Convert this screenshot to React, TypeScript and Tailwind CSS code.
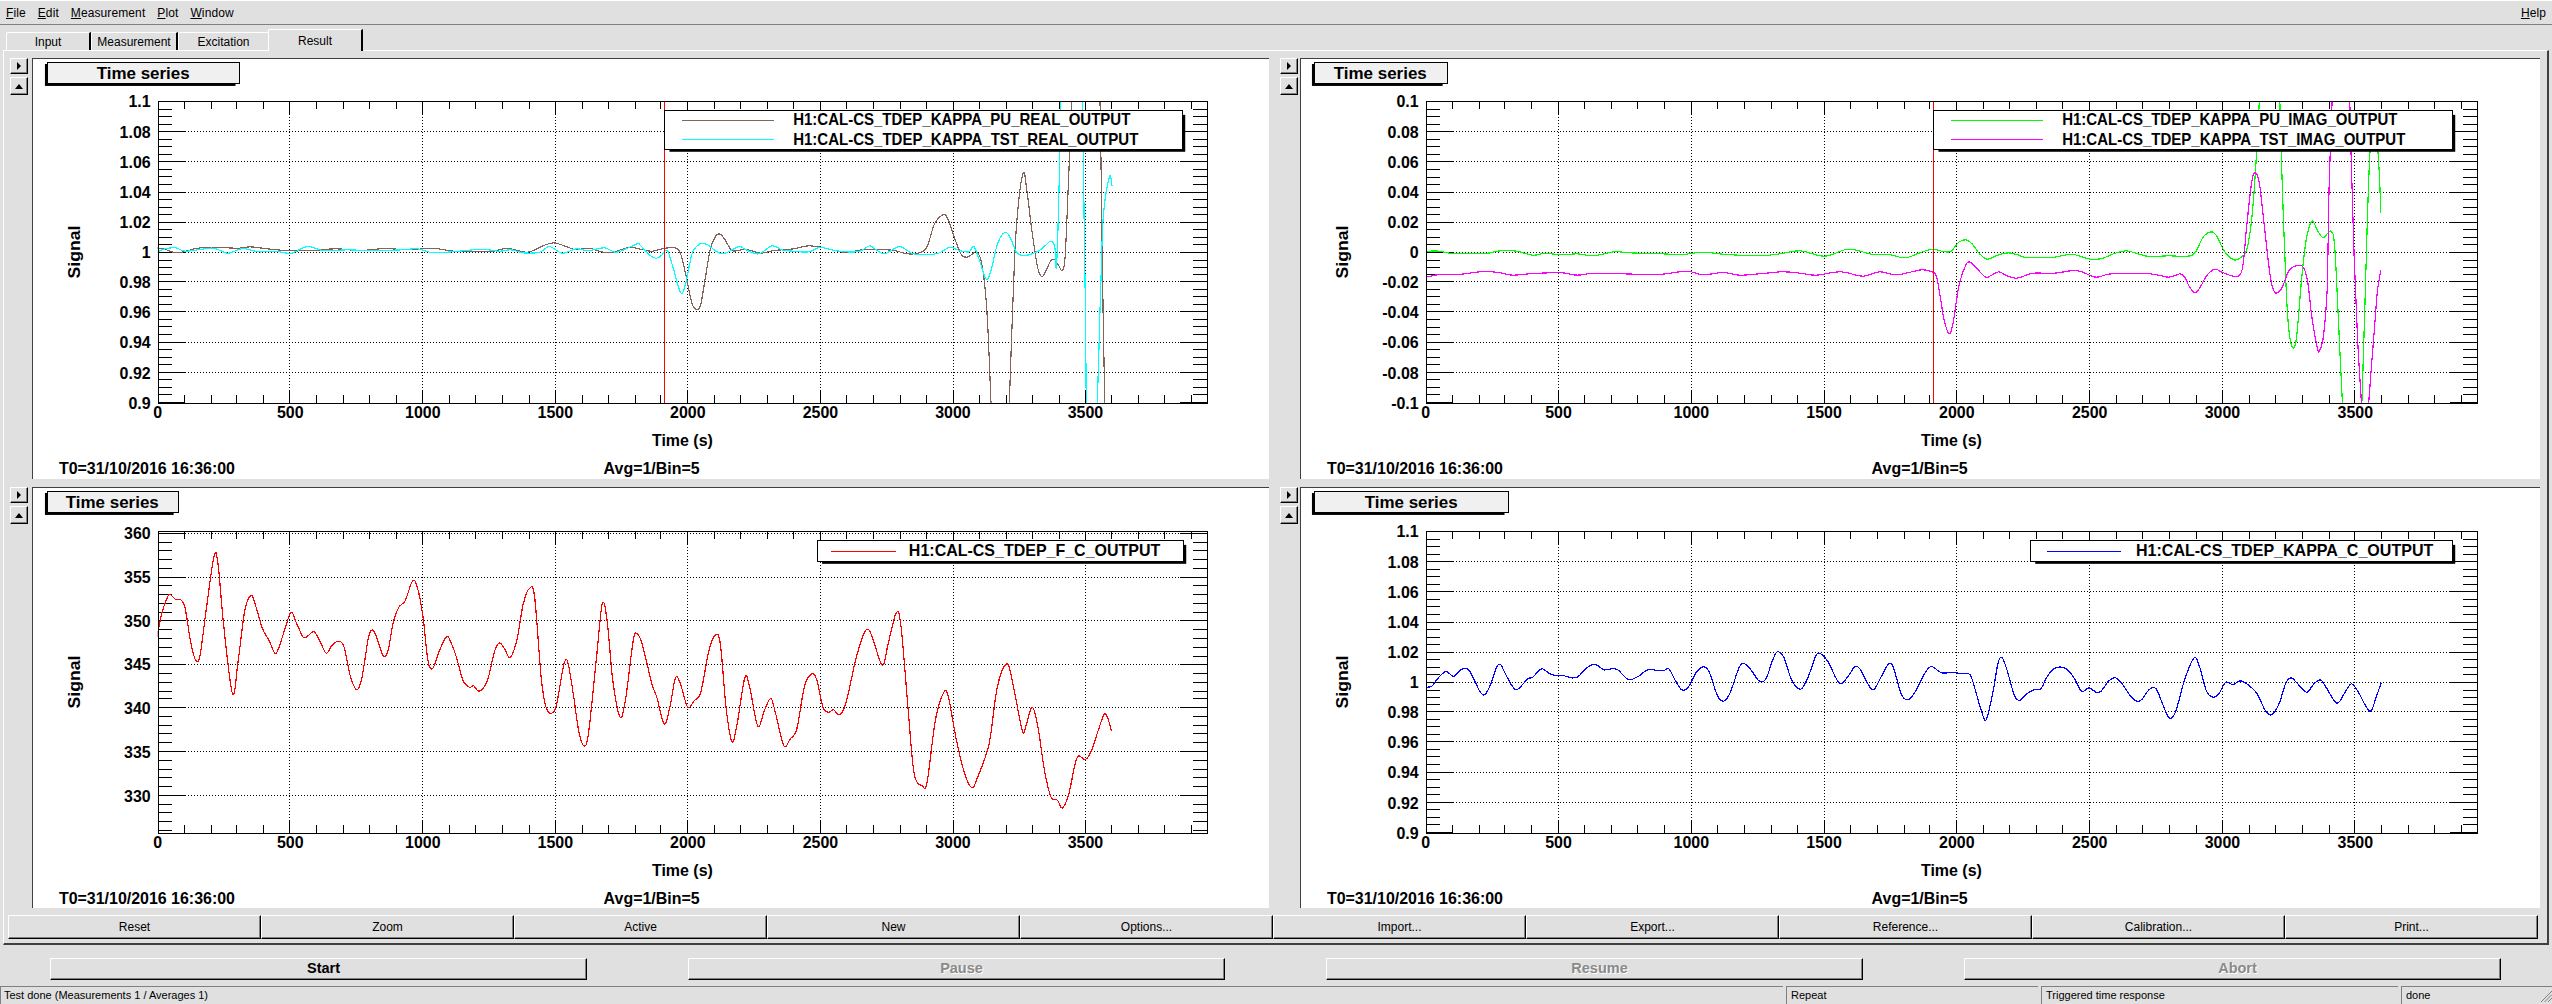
import React from 'react';

type Pt = [number, number];

// curve points were read off enlarged crops, crop -> screen coordinates
const crop = (pts: Pt[], ox: number, sx: number, oy: number): Pt[] =>
  pts.map(([x, y]) => [ox + x / sx, oy + y / 3] as Pt);

const brownEarly: Pt[] = [[190,562],[200,566],[215,577],[240,563],[260,560],[290,563],[305,559],[330,566],[355,571],[380,570],[410,565],[440,570],[470,564],[500,568],[530,563],[555,572],[600,573],[620,563],[645,575],[665,555],[678,547],[695,560],[705,568],[720,563],[745,577],[770,560]];
const brownLate: Pt[] = [[0,476],[30,482],[60,474],[90,472],[105,490],[120,560],[135,640],[148,658],[158,640],[170,560],[182,480],[195,440],[207,430],[220,445],[240,480],[270,477],[290,480],[315,488],[350,480],[400,475],[440,466],[480,472],[510,480],[540,486],[580,478],[620,478],[660,479],[700,490],[730,487],[750,470],[770,400],[792,373],[805,385],[825,450],[840,492],[855,500],[870,490],[880,484],[892,510],[903,600],[910,720],[918,938],[920,990],[964,990],[966,938],[975,650],[985,400],[1002,248],[1012,300],[1025,420],[1040,530],[1050,558],[1060,545],[1075,510],[1085,508],[1095,525],[1105,540],[1112,500],[1120,300],[1130,20],[1140,-60],[1195,-60],[1203,20],[1206,200],[1212,690],[1217,990]];
const cyanEarly: Pt[] = [[190,575],[200,565],[213,562],[225,572],[245,566],[260,563],[278,578],[295,564],[315,574],[335,572],[355,578],[375,558],[395,570],[425,568],[445,570],[465,570],[490,568],[510,565],[530,577],[560,572],[590,566],[610,572],[625,568],[640,577],[660,575],[672,558],[688,578],[705,565],[720,570],[740,562],[755,575],[780,550]];
const cyanLate: Pt[] = [[0,465],[20,490],[40,503],[55,495],[70,480],[85,530],[105,607],[118,580],[135,490],[155,460],[175,462],[195,480],[215,490],[240,478],[260,468],[280,480],[310,490],[345,466],[370,478],[400,482],[440,484],[470,470],[500,478],[540,484],[575,482],[600,466],[620,480],[640,490],[678,468],[710,488],[740,493],[780,488],[810,470],[835,480],[860,484],[873,468],[888,510],[905,566],[918,540],[935,460],[955,425],[970,445],[985,485],[1005,495],[1040,483],[1060,465],[1075,452],[1085,470],[1090,520],[1098,200],[1100,20],[1102,-60],[1156,-60],[1158,20],[1162,400],[1166,700],[1170,990],[1193,990],[1205,600],[1212,380],[1228,258],[1235,285]];
const greenEarly: Pt[] = [[178,572],[195,572],[212,580],[240,578],[250,580],[270,571],[290,572],[310,584],[325,578],[345,583],[365,580],[385,586],[410,574],[430,577],[470,580],[495,582],[520,575],[550,582],[590,586],[615,580],[640,571],[670,587],[695,568],[708,568],[730,582],[750,582],[770,592],[790,575]];
const greenLate: Pt[] = [[32,476],[60,483],[80,482],[100,455],[118,448],[135,460],[155,490],[175,506],[200,495],[230,487],[255,493],[275,501],[310,502],[350,500],[395,491],[420,498],[445,506],[475,504],[510,488],[540,481],[570,490],[600,498],[650,496],[700,497],[720,485],[740,440],[760,424],[775,435],[795,480],[820,508],[840,500],[855,475],[868,380],[878,230],[888,20],[890,-60],[938,-60],[941,20],[948,300],[958,600],[965,720],[975,772],[985,740],[998,570],[1010,450],[1025,392],[1040,420],[1055,441],[1075,422],[1085,470],[1095,700],[1105,938],[1108,990],[1150,990],[1160,800],[1170,400],[1178,170],[1188,100],[1197,170],[1203,280],[1205,368]];
const magentaEarly: Pt[] = [[178,650],[195,642],[215,643],[245,634],[265,635],[285,644],[310,639],[345,637],[365,644],[385,638],[420,640],[465,642],[500,632],[520,643],[545,636],[565,644],[590,640],[618,634],[640,638],[660,644],[690,634],[718,647],[738,634],[760,643],[790,628]];
const magentaLate: Pt[] = [[32,545],[42,560],[52,620],[62,690],[75,730],[85,700],[100,590],[118,525],[130,515],[145,530],[170,560],[185,555],[205,544],[225,555],[250,563],[270,557],[295,548],[350,548],[395,541],[420,543],[460,560],[500,550],[600,550],[650,560],[680,550],[692,560],[705,590],[720,607],[735,585],[750,555],[770,536],[790,545],[815,556],[835,555],[845,520],[855,400],[868,270],[878,247],[888,280],[900,400],[915,550],[925,600],[935,607],[948,590],[965,540],[985,526],[1003,530],[1015,580],[1025,680],[1040,775],[1045,780],[1055,740],[1065,600],[1070,300],[1078,30],[1080,-60],[1120,-60],[1124,20],[1128,200],[1136,500],[1145,750],[1155,938],[1158,990],[1172,990],[1175,920],[1190,700],[1197,600],[1206,538]];
const redTrace: Pt[] = [[190,472],[196,400],[203,350],[207,342],[213,356],[220,358],[225,385],[232,490],[238,540],[243,525],[250,400],[260,230],[265,245],[272,430],[283,640],[290,540],[298,390],[306,344],[312,380],[320,445],[328,480],[335,518],[340,500],[348,440],[355,394],[362,430],[370,470],[376,465],[383,453],[390,480],[398,518],[405,495],[413,482],[420,500],[428,590],[436,628],[442,590],[450,470],[455,448],[460,470],[468,525],[474,510],[480,430],[487,380],[495,360],[504,301],[510,320],[517,410],[523,540],[529,563],[537,510],[546,468],[552,490],[558,530],[566,600],[574,620],[579,616],[586,632],[596,600],[605,510],[611,487],[617,505],[624,530],[632,480],[640,370],[648,322],[654,350],[662,590],[668,680],[675,698],[681,670],[690,550],[695,548],[702,650],[708,750],[714,796],[720,760],[730,530],[737,370],[743,420],[750,600],[759,710],[766,650],[775,480],[780,460],[786,490],[798,610],[804,650],[813,730],[820,680],[827,592],[833,610],[842,680],[850,660],[858,635],[868,510],[876,463],[882,490],[889,680],[896,782],[902,740],[912,592],[918,620],[928,737],[936,690],[944,654],[950,700],[960,796],[968,775],[976,745],[985,620],[993,582],[1000,595],[1008,680],[1015,695],[1021,688],[1028,703],[1036,670],[1048,540],[1058,460],[1064,447],[1070,480],[1081,554],[1088,490],[1098,397],[1104,440],[1113,700],[1120,880],[1130,917],[1136,905],[1146,720],[1156,637],[1162,650],[1172,780],[1182,880],[1191,922],[1198,890],[1212,790],[1222,620],[1234,550],[1242,620],[1253,752],[1258,730],[1265,680],[1272,740],[1280,870],[1288,950],[1296,960],[1302,983],[1310,940],[1320,832],[1330,838],[1338,810],[1346,750],[1354,700],[1360,730],[1362,752]];
const blueTrace: Pt[] = [[178,620],[185,617],[192,595],[200,576],[204,573],[212,587],[222,566],[230,566],[236,590],[245,635],[251,641],[258,610],[265,560],[270,552],[276,580],[284,615],[290,628],[298,610],[304,594],[310,590],[317,570],[322,565],[330,578],[338,585],[346,584],[358,592],[366,588],[375,565],[384,552],[390,555],[398,568],[410,564],[416,570],[428,597],[440,588],[452,568],[470,571],[478,565],[486,600],[494,628],[502,620],[512,575],[521,559],[528,575],[538,645],[546,662],[554,635],[565,560],[572,550],[580,570],[590,602],[598,595],[606,540],[612,514],[620,530],[630,600],[641,626],[650,590],[660,524],[667,522],[675,545],[685,595],[691,610],[700,585],[708,558],[714,565],[724,610],[731,628],[740,590],[750,549],[756,565],[765,640],[773,658],[782,635],[795,575],[803,558],[815,577],[830,575],[838,580],[850,582],[858,640],[864,690],[870,718],[878,640],[885,545],[890,532],[896,570],[905,645],[912,659],[920,640],[930,627],[938,624],[945,590],[955,563],[968,563],[978,590],[988,632],[997,622],[1006,635],[1012,632],[1022,600],[1030,592],[1038,610],[1048,645],[1056,662],[1062,658],[1072,626],[1080,625],[1088,670],[1096,712],[1104,695],[1115,600],[1127,532],[1134,560],[1142,630],[1150,650],[1158,638],[1166,605],[1175,612],[1184,601],[1195,615],[1205,640],[1215,690],[1223,703],[1232,670],[1240,610],[1247,592],[1255,610],[1266,635],[1275,610],[1283,598],[1290,620],[1300,660],[1306,665],[1316,625],[1322,610],[1330,635],[1340,680],[1346,690],[1352,650],[1358,608]];

// smooth path through the read-off points
function smooth(pts: Pt[]) {
  let d = `M${pts[0][0].toFixed(1)} ${pts[0][1].toFixed(1)}`;
  for (let i = 0; i < pts.length - 1; i++) {
    const p0 = pts[Math.max(i - 1, 0)];
    const p1 = pts[i];
    const p2 = pts[i + 1];
    const p3 = pts[Math.min(i + 2, pts.length - 1)];
    const c1x = p1[0] + (p2[0] - p0[0]) / 6;
    const c1y = p1[1] + (p2[1] - p0[1]) / 6;
    const c2x = p2[0] - (p3[0] - p1[0]) / 6;
    const c2y = p2[1] - (p3[1] - p1[1]) / 6;
    d += `C${c1x.toFixed(1)} ${c1y.toFixed(1)} ${c2x.toFixed(1)} ${c2y.toFixed(1)} ${p2[0].toFixed(1)} ${p2[1].toFixed(1)}`;
  }
  return d;
}

type LegendRow = { name: string; color: string; width: number };

type ChartProps = {
  id: string;
  canvas: { x: number; y: number; w: number; h: number };
  plot: { l: number; r: number; t: number; b: number };
  title: { x: number; w: number };
  y: { min: number; max: number; major: number; minorDiv: number; first: number; digits: number };
  series: { color: string; pts: Pt[] }[];
  legend: { l: number; r: number; t: number; b: number; lineX: [number, number]; textX: number; rows: LegendRow[] };
  marker?: number;
};

const XMAX = 3959;

function Chart({ id, canvas, plot, title, y, series, legend, marker }: ChartProps) {
  const px = (v: number) => plot.l + (v / XMAX) * (plot.r - plot.l);
  const py = (v: number) => plot.t + ((y.max - v) / (y.max - y.min)) * (plot.b - plot.t);

  const majors: number[] = [];
  for (let v = y.first; v >= y.min - 1e-6; v -= y.major) majors.push(v);
  const minors: number[] = [];
  const step = y.major / y.minorDiv;
  for (let v = y.first + step * 4; v >= y.min - 1e-6; v -= step) {
    if (v <= y.max + 1e-6) minors.push(v);
  }
  const xMajors = [0, 500, 1000, 1500, 2000, 2500, 3000, 3500];
  const xMinors: number[] = [];
  for (let v = 100; v < XMAX; v += 100) if (v % 500 !== 0) xMinors.push(v);

  const ticks: string[] = [];
  const grid: string[] = [];
  majors.forEach((v) => {
    const p = Math.round(py(v) - 0.5) + 0.5;
    ticks.push(`M${plot.l} ${p}h27M${plot.r} ${p}h-27`);
    if (Math.abs(v - y.max) > 1e-6 && Math.abs(v - y.min) > 1e-6) grid.push(`M${plot.l + 27} ${p}H${plot.r - 27}`);
  });
  minors.forEach((v) => {
    const p = Math.round(py(v) - 0.5) + 0.5;
    ticks.push(`M${plot.l} ${p}h14M${plot.r} ${p}h-14`);
  });
  xMajors.forEach((v) => {
    const p = Math.round(px(v) - 0.5) + 0.5;
    ticks.push(`M${p} ${plot.t}v13M${p} ${plot.b}v-13`);
    if (v > 0) grid.push(`M${p} ${plot.t + 13}V${plot.b - 13}`);
  });
  xMinors.forEach((v) => {
    const p = Math.round(px(v) - 0.5) + 0.5;
    ticks.push(`M${p} ${plot.t}v8M${p} ${plot.b}v-8`);
  });

  const midX = (plot.l + plot.r) / 2;
  const midY = (plot.t + plot.b) / 2;
  const titleY = canvas.y + 3;

  return (
    <svg
      className="block bg-white border-t border-l border-t-[#404040] border-l-[#404040]"
      width={canvas.w}
      height={canvas.h}
      viewBox={`${canvas.x} ${canvas.y} ${canvas.w} ${canvas.h}`}
    >
      <defs>
        <clipPath id={id}>
          <rect x={plot.l} y={plot.t} width={plot.r - plot.l} height={plot.b - plot.t} />
        </clipPath>
      </defs>

      {/* title box */}
      <rect x={title.x - 2} y={titleY + 2} width={title.w - 2} height={22} fill="#000" />
      <rect x={title.x + 0.5} y={titleY + 0.5} width={title.w} height={21} fill="#f0f0f0" stroke="#000" shapeRendering="crispEdges" />
      <text x={title.x + title.w / 2} y={titleY + 17} textAnchor="middle" className="fill-black text-[17px] font-bold">
        Time series
      </text>

      {/* grid and ticks */}
      <path d={grid.join('')} stroke="#000" strokeDasharray="1 2" fill="none" shapeRendering="crispEdges" />
      <path d={ticks.join('')} stroke="#000" fill="none" shapeRendering="crispEdges" />

      {/* curves */}
      <g clipPath={`url(#${id})`}>
        {series.map((s) => (
          <path key={s.color} d={smooth(s.pts)} fill="none" stroke={s.color} strokeWidth={1.2} shapeRendering="crispEdges" />
        ))}
      </g>
      {marker && <path d={`M${marker + 0.5} ${plot.t}V${plot.b}`} stroke="#ff0000" shapeRendering="crispEdges" />}

      <rect x={plot.l + 0.5} y={plot.t + 0.5} width={plot.r - plot.l} height={plot.b - plot.t} fill="none" stroke="#000" shapeRendering="crispEdges" />

      {/* legend */}
      <rect x={legend.l + 5} y={legend.t + 5} width={legend.r - legend.l - 2} height={legend.b - legend.t - 2} fill="#000" />
      <rect x={legend.l + 0.5} y={legend.t + 0.5} width={legend.r - legend.l} height={legend.b - legend.t} fill="#fff" stroke="#000" shapeRendering="crispEdges" />
      {legend.rows.map((row, i) => {
        const rowY = legend.rows.length > 1 ? legend.t + 9.5 + i * 19.5 : (legend.t + legend.b) / 2;
        return (
          <g key={row.name}>
            <path d={`M${legend.lineX[0]} ${Math.round(rowY) + 0.5}H${legend.lineX[1]}`} stroke={row.color} shapeRendering="crispEdges" />
            <text x={legend.textX} y={rowY + 6} textLength={row.width} lengthAdjust="spacingAndGlyphs" className="fill-black text-[16px] font-bold">
              {row.name}
            </text>
          </g>
        );
      })}

      {/* axis labels */}
      {majors.map((v) => (
        <text key={v} x={plot.l - 7} y={py(v) + 6} textAnchor="end" className="fill-black text-[16px] font-bold">
          {Math.abs(v) < 1e-6 ? '0' : parseFloat(v.toFixed(y.digits)).toString()}
        </text>
      ))}
      {xMajors.map((v) => (
        <text key={v} x={px(v)} y={plot.b + 15.5} textAnchor="middle" className="fill-black text-[16px] font-bold">
          {v}
        </text>
      ))}
      <text x={midX} y={plot.b + 43} textAnchor="middle" className="fill-black text-[16px] font-bold">
        Time (s)
      </text>
      <text
        x={plot.l - 78}
        y={midY}
        textAnchor="middle"
        textLength={53}
        lengthAdjust="spacingAndGlyphs"
        transform={`rotate(-90 ${plot.l - 78} ${midY})`}
        className="fill-black text-[17px] font-bold"
      >
        Signal
      </text>
      <text x={plot.l - 99} y={plot.b + 71.5} className="fill-black text-[16px] font-bold">
        T0=31/10/2016 16:36:00
      </text>
      <text x={plot.l + 447} y={plot.b + 71.5} className="fill-black text-[16px] font-bold">
        Avg=1/Bin=5
      </text>
    </svg>
  );
}

const raised = 'border border-t-white border-l-white border-r-black border-b-black shadow-[inset_-1px_-1px_0_#808080]';

function ArrowButtons() {
  return (
    <div className="flex w-[18px] shrink-0 flex-col gap-[3px]">
      <div className={`flex h-[16px] items-center justify-center ${raised}`}>
        <svg width="6" height="8" viewBox="0 0 6 8"><path d="M1 0l4 4-4 4z" fill="#000" /></svg>
      </div>
      <div className={`flex h-[18px] items-center justify-center ${raised}`}>
        <svg width="8" height="5" viewBox="0 0 8 5"><path d="M4 0l4 5H0z" fill="#000" /></svg>
      </div>
    </div>
  );
}

const toolbar = ['Reset', 'Zoom', 'Active', 'New', 'Options...', 'Import...', 'Export...', 'Reference...', 'Calibration...', 'Print...'];
const transport = [
  { label: 'Start', enabled: true },
  { label: 'Pause', enabled: false },
  { label: 'Resume', enabled: false },
  { label: 'Abort', enabled: false },
];

const plotTop = { t: 100.5, b: 402.5 };
const plotBottom = { t: 530.5, b: 832.5 };
const kappaAxis = { min: 0.9, max: 1.1, major: 0.02, minorDiv: 4, first: 1.1, digits: 2 };

export default function App() {
  return (
    <div className="flex h-[1004px] w-[2552px] flex-col overflow-hidden bg-[#e0e0e0] font-['Liberation_Sans',Arial,sans-serif] text-[12px] text-black">
      {/* menu bar */}
      <div className="flex h-[25px] shrink-0 items-center gap-3 border-t border-b border-t-white border-b-[#808080] px-[6px] tracking-[0.1px]">
        <span><u>F</u>ile</span>
        <span><u>E</u>dit</span>
        <span><u>M</u>easurement</span>
        <span><u>P</u>lot</span>
        <span><u>W</u>indow</span>
        <span className="ml-auto"><u>H</u>elp</span>
      </div>

      {/* tabs */}
      <div className="relative z-10 flex h-[25px] shrink-0 items-end pl-[6px]">
        <div className="flex h-[18px] w-[85px] items-center justify-center rounded-tl-[2px] border-t border-l border-r-2 border-t-white border-l-white border-r-black">Input</div>
        <div className="flex h-[18px] w-[87px] items-center justify-center rounded-tl-[2px] border-t border-l border-r-2 border-t-white border-l-white border-r-black">Measurement</div>
        <div className="flex h-[18px] w-[90px] items-center justify-center rounded-tl-[2px] border-t border-l border-t-white border-l-white">Excitation</div>
        <div className="-mb-px flex h-[22px] w-[95px] items-start justify-center rounded-tl-[2px] border-t border-l border-r-2 border-t-white border-l-white border-r-black bg-[#e0e0e0] pt-[2px]">Result</div>
      </div>

      {/* tab body */}
      <div className="mx-[3px] flex h-[895px] shrink-0 flex-col border-t border-l border-r-2 border-b-2 border-t-white border-l-white border-r-[#404040] border-b-[#404040] pt-[7px]">
        <div className="flex flex-col gap-[8px]">
          <div className="flex">
            <div className="ml-[6px] flex w-[1259px] gap-[4px]">
              <ArrowButtons />
              <Chart
                id="kappa-real"
                canvas={{ x: 32, y: 58, w: 1237, h: 421 }}
                plot={{ l: 156, r: 1208, ...plotTop }}
                title={{ x: 45, w: 193 }}
                y={kappaAxis}
                marker={664}
                series={[
                  { color: '#84635a', pts: [...crop(brownEarly, 0, 1.225, 60), ...crop(brownLate, 640, 2.613, 90)] },
                  { color: '#00ffff', pts: [...crop(cyanEarly, 0, 1.225, 60), ...crop(cyanLate, 640, 2.613, 90)] },
                ]}
                legend={{
                  l: 664, r: 1183, t: 109, b: 148, lineX: [682, 774], textX: 793,
                  rows: [
                    { name: 'H1:CAL-CS_TDEP_KAPPA_PU_REAL_OUTPUT', color: '#84635a', width: 338 },
                    { name: 'H1:CAL-CS_TDEP_KAPPA_TST_REAL_OUTPUT', color: '#00ffff', width: 346 },
                  ],
                }}
              />
            </div>
            <div className="ml-[11px] flex gap-[2px]">
              <ArrowButtons />
              <Chart
                id="kappa-imag"
                canvas={{ x: 1300, y: 58, w: 1240, h: 421 }}
                plot={{ l: 1424, r: 2478, ...plotTop }}
                title={{ x: 1312, w: 133 }}
                y={{ min: -0.1, max: 0.1, major: 0.02, minorDiv: 4, first: 0.1, digits: 2 }}
                marker={1933}
                series={[
                  { color: '#00ff00', pts: [...crop(greenEarly, 1280, 1.2327, 60), ...crop(greenLate, 1920, 2.613, 90)] },
                  { color: '#ff00ff', pts: [...crop(magentaEarly, 1280, 1.2327, 60), ...crop(magentaLate, 1920, 2.613, 90)] },
                ]}
                legend={{
                  l: 1933, r: 2453, t: 109, b: 148, lineX: [1951, 2043], textX: 2062,
                  rows: [
                    { name: 'H1:CAL-CS_TDEP_KAPPA_PU_IMAG_OUTPUT', color: '#00ff00', width: 336 },
                    { name: 'H1:CAL-CS_TDEP_KAPPA_TST_IMAG_OUTPUT', color: '#ff00ff', width: 344 },
                  ],
                }}
              />
            </div>
          </div>
          <div className="flex">
            <div className="ml-[6px] flex w-[1259px] gap-[4px]">
              <ArrowButtons />
              <Chart
                id="f-c"
                canvas={{ x: 32, y: 487, w: 1237, h: 421 }}
                plot={{ l: 156, r: 1208, ...plotBottom }}
                title={{ x: 45, w: 131 }}
                y={{ min: 325.76, max: 360.2, major: 5, minorDiv: 5, first: 360, digits: 0 }}
                series={[{ color: '#ff0000', pts: crop(redTrace, 0, 1.225, 480) }]}
                legend={{
                  l: 817, r: 1184, t: 539, b: 560, lineX: [831, 896], textX: 909,
                  rows: [{ name: 'H1:CAL-CS_TDEP_F_C_OUTPUT', color: '#ff0000', width: 252 }],
                }}
              />
            </div>
            <div className="ml-[11px] flex gap-[2px]">
              <ArrowButtons />
              <Chart
                id="kappa-c"
                canvas={{ x: 1300, y: 487, w: 1240, h: 421 }}
                plot={{ l: 1424, r: 2478, ...plotBottom }}
                title={{ x: 1312, w: 195 }}
                y={kappaAxis}
                series={[{ color: '#0000ff', pts: crop(blueTrace, 1280, 1.2327, 480) }]}
                legend={{
                  l: 2030, r: 2453, t: 539, b: 560, lineX: [2047, 2121], textX: 2136,
                  rows: [{ name: 'H1:CAL-CS_TDEP_KAPPA_C_OUTPUT', color: '#0000ff', width: 298 }],
                }}
              />
            </div>
          </div>
        </div>

        {/* plot toolbar */}
        <div className="ml-[4px] mt-[7px] flex h-[24px]">
          {toolbar.map((label) => (
            <div key={label} className={`flex w-[253px] items-center justify-center ${raised}`}>{label}</div>
          ))}
        </div>
      </div>

      {/* start / pause / resume / abort */}
      <div className="flex h-[41px] shrink-0 items-center gap-[101px] pl-[50px] pt-[6px]">
        {transport.map((b) => (
          <div
            key={b.label}
            className={`flex h-[22px] w-[537px] items-center justify-center pl-[10px] text-[14.5px] font-bold ${raised} ${b.enabled ? 'text-black' : 'text-[#8a8a8a] [text-shadow:1px_1px_0_#fff]'}`}
          >
            {b.label}
          </div>
        ))}
      </div>

      {/* status bar */}
      <div className="flex h-[18px] shrink-0 gap-[3px] text-[11px]">
        <div className="flex w-[1783px] items-center border-t border-l border-[#808080] pl-[3px]">Test done (Measurements 1 / Averages 1)</div>
        <div className="flex w-[252px] items-center border-t border-l border-[#808080] pl-[4px]">Repeat</div>
        <div className="flex w-[357px] items-center border-t border-l border-[#808080] pl-[4px]">Triggered time response</div>
        <div className="flex flex-1 items-center border-t border-l border-[#808080] pl-[4px]">
          done
          <svg className="ml-auto" width="12" height="12" viewBox="0 0 12 12">
            <path d="M12 1L1 12M12 4.5L4.5 12M12 8L8 12" stroke="#808080" />
          </svg>
        </div>
      </div>
    </div>
  );
}
